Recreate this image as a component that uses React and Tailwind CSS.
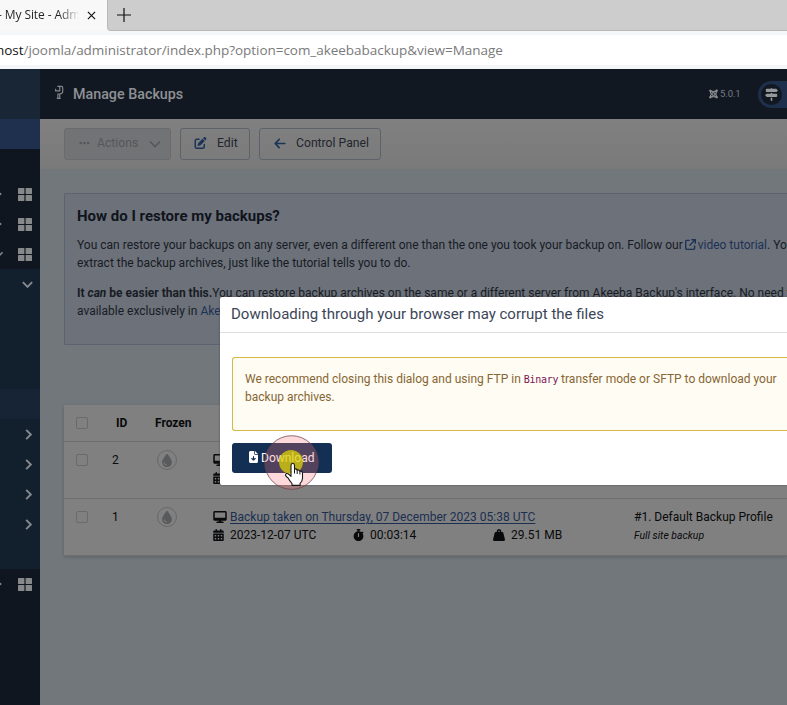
import React from 'react';
import {
  FaArrowLeft, FaArrowUpRightFromSquare, FaCalendarDays, FaDesktop, FaDroplet,
  FaEllipsis, FaFileArrowDown, FaJoomla, FaPenToSquare, FaSignsPost, FaStopwatch, FaWeightHanging,
} from 'react-icons/fa6';

const Chevron = ({ className, d = 'M2 4.5 7 9.5 12 4.5', w = 1.9 }) => (
  <svg viewBox="0 0 14 14" className={className} fill="none" stroke="currentColor" strokeWidth={w}>
    <path d={d} />
  </svg>
);

function BrowserBar() {
  return (
    <div className="h-[69px] shrink-0 bg-[#f4f6f7] font-['Open_Sans',sans-serif] whitespace-nowrap">
      <div className="flex h-[31px] bg-[#f7f7f7]">
        <div className="flex h-[31px] w-[107px] items-center bg-[#f8f8f8]">
          <span className="-ml-[2px] w-[81px] overflow-hidden bg-gradient-to-r from-[#222] from-75% to-[#f8f8f8] to-100% bg-clip-text pb-[2px] text-[12px] tracking-[-0.1px] text-transparent">- My Site - Adm</span>
          <svg viewBox="0 0 10 10" className="ml-[8px] h-[9px] w-[9px]" stroke="#111" strokeWidth="1.3"><path d="M1 1 9 9M9 1 1 9" /></svg>
        </div>
        <div className="flex h-[31px] flex-1 rounded-bl-[4px] border-b border-l border-[#b9b9b9] bg-[#cdcdcd]">
          <svg viewBox="0 0 14 14" className="mt-[8px] ml-[9px] h-[14px] w-[14px]" stroke="#111" strokeWidth="1.2"><path d="M7 0V14M0 7H14" /></svg>
        </div>
      </div>
      <div className="mt-[4px] flex h-[30px] items-center bg-white text-[13.5px] tracking-[-0.04px] text-[#7a7a7a]">
        <span className="-ml-[4px] text-[#151515]">host</span><span>/joomla/administrator/index.php?option=com_akeebabackup&amp;view=Manage</span>
      </div>
    </div>
  );
}

const Grid = () => (
  <svg viewBox="0 0 14 13" className="h-[13px] w-[14px]" fill="#86888a">
    <rect width="6.4" height="6" rx=".6" /><rect x="7.6" width="6.4" height="6" rx=".6" />
    <rect y="7" width="6.4" height="6" rx=".6" /><rect x="7.6" y="7" width="6.4" height="6" rx=".6" />
  </svg>
);

function GridRow({ open }) {
  return (
    <div className="flex h-[30px] items-center">
      {open
        ? <Chevron className="-ml-[6px] h-[10px] w-[10px] text-[#86888a]" w={2.2} />
        : <Chevron className="-ml-[6px] h-[10px] w-[10px] text-[#86888a]" d="M4.5 3 9 7 4.5 11" w={2.6} />}
      <span className="ml-[14px]"><Grid /></span>
    </div>
  );
}

const SubRow = () => (
  <div className="flex h-[30px] items-center pl-[22px]">
    <Chevron className="h-[13px] w-[13px] text-[#85898d]" d="M4.5 2 9.5 7 4.5 12" w={2.1} />
  </div>
);

function Sidebar() {
  return (
    <aside className="flex w-10 shrink-0 flex-col bg-[#0f1620]">
      <div className="h-[50px] bg-[#182636]" />
      <div className="h-[30px] bg-[#1e304e]" />
      <div className="h-[30px]" />
      <GridRow /><GridRow /><GridRow open />
      <div className="flex h-[300px] flex-col bg-[#121f2d]">
        <div className="flex h-[30px] items-center pl-[21px]"><Chevron className="h-[13px] w-[13px] text-[#85898d]" w={2.1} /></div>
        <div className="h-[90px]" />
        <div className="h-[30px] bg-[#162436]" />
        <SubRow /><SubRow /><SubRow /><SubRow />
      </div>
      <GridRow />
    </aside>
  );
}

function Header() {
  return (
    <header className="flex h-[50px] items-center bg-[#111822] text-[#8f9194]">
      <svg viewBox="0 0 10 16" className="-mt-[4px] ml-[14px] h-[15px] w-[10px] shrink-0" fill="none" stroke="#85878a" strokeWidth="1.2">
        <path d="M3.2 1.4H7.4Q9 1.4 9 3V7Q9 9.2 5.8 9.6V14M5.8 9.6H3.8V14M2.6 14.3H6.8M5.8 2V6.2H1.4V4" />
      </svg>
      <h1 className="mt-[1px] ml-[9px] w-[126px] text-[14.3px] font-medium whitespace-nowrap">Manage Backups</h1>
      <FaJoomla className="ml-[510px] h-[10px] w-[9px] shrink-0" />
      <span className="ml-[2px] w-[20px] text-[9.5px] tracking-[-0.1px] text-[#777b80]">5.0.1</span>
      <div className="ml-[18px] flex h-[27px] flex-1 items-center rounded-l-full bg-[#1d2f4b] pl-[3px]">
        <span className="flex h-[21px] w-[21px] shrink-0 items-center justify-center rounded-full bg-[#111822]"><FaSignsPost className="h-[13px] w-[13px] text-[#96989a]" /></span>
      </div>
    </header>
  );
}

function Toolbar() {
  return (
    <div className="flex h-[51px] shrink-0 border-b border-[#72777a] bg-gradient-to-b from-[#808080] to-[#7a7a7b] pt-[9px] pl-6 text-[12.2px] whitespace-nowrap">
      <div className="flex h-8 w-[107px] items-center rounded-[3px] border border-[#696b6e] bg-[#727375] pb-[2px] text-[#55575b]">
        <FaEllipsis className="ml-[14px] h-[12px] w-[11px]" />
        <span className="ml-[7px] w-[42px]">Actions</span>
        <Chevron className="mt-[2px] ml-[9px] h-[14px] w-[14px]" w={1.7} />
      </div>
      <div className="ml-[9px] flex h-8 w-[70px] items-center rounded-[3px] border border-[#5d626b] pb-[2px] text-[#22262d]">
        <FaPenToSquare className="ml-[13px] h-[12px] w-[13px] text-[#1b3458]" />
        <span className="ml-[10px]">Edit</span>
      </div>
      <div className="ml-[9px] flex h-8 w-[122px] items-center rounded-[3px] border border-[#5d626b] pb-[2px] text-[#22262d]">
        <FaArrowLeft className="ml-[14px] h-[13px] w-[12px] text-[#1b3458]" />
        <span className="ml-[10px]">Control Panel</span>
      </div>
    </div>
  );
}

function Help() {
  return (
    <section className="mt-[23px] ml-6 h-[152px] shrink-0 rounded-l-[2px] border border-r-0 border-[#5b6271] bg-[#6c717a] pt-[12px] pl-[12px] text-[12px] leading-[18px] whitespace-nowrap text-[#181c24]">
      <h2 className="text-[15px] leading-[20px] font-bold text-[#10141c]">How do I restore my backups?</h2>
      <p className="mt-[10px]">
        You can restore your backups on any server, even a different one than the one you took your backup on. Follow our{' '}
        <span className="-ml-px text-[#1c3155]"><FaArrowUpRightFromSquare className="mr-[2px] inline h-[11px] w-[11px] align-[-1px]" />video tutorial</span>. You can<br />
        extract the backup archives, just like the tutorial tells you to do.
      </p>
      <p className="mt-[12px]">
        <b>It <i>can</i> be easier than this.</b>You can restore backup archives on the same or a different server from Akeeba Backup's interface. No need to<br />
        available exclusively in <span className="text-[#1c3155]">Akeeba Backup</span>
      </p>
    </section>
  );
}

const Box = () => <span className="mt-[12px] ml-[12px] block h-[12px] w-[12px] shrink-0 rounded-[2px] border border-[#6a6a6a]" />;

function Row({ id, time }) {
  return (
    <div className="flex h-[57px] border-b border-[#6e6f70]">
      <Box />
      <span className="mt-[9px] ml-[24px] w-[45px] leading-[18px]">{id}</span>
      <span className="mt-[8px] flex h-[20px] w-[20px] items-center justify-center rounded-full border border-[#686868]"><FaDroplet className="h-[13px] w-[12px] shrink-0 text-[#595a5b]" /></span>
      <div className="mt-[9px] ml-[36px] w-[421px] leading-[18px]">
        <div className="flex items-center"><FaDesktop className="mr-[3px] h-[12px] w-[14px]" /><span className="text-[#1b2f51] underline underline-offset-2">Backup taken on Thursday, 07 December 2023 {time} UTC</span></div>
        <div className="flex items-center">
          <span className="flex w-[140px] items-center"><FaCalendarDays className="mr-[6px] h-[12px] w-[11px]" />2023-12-07 UTC</span>
          <span className="flex w-[140px] items-center"><FaStopwatch className="mr-[6px] h-[12px] w-[11px]" />00:03:14</span>
          <span className="flex items-center"><FaWeightHanging className="mr-[6px] h-[12px] w-[12px]" />29.51 MB</span>
        </div>
      </div>
      <div className="mt-[9px] leading-[18px]">
        <div>#1. Default Backup Profile</div>
        <div className="pt-[1px] text-[10.4px] italic">Full site backup</div>
      </div>
    </div>
  );
}

function Backups() {
  return (
    <section className="mt-[60px] ml-6 shrink-0 bg-[#808080] text-[12.03px] whitespace-nowrap text-[#090a0c] shadow-[0_1px_3px_#5b6064]">
      <div className="flex h-[37px] items-center border-b border-[#6c6d6e] font-bold">
        <span className="ml-[12px] block h-[12px] w-[12px] rounded-[2px] border border-[#6a6a6a]" />
        <span className="ml-[28px] w-[39px]">ID</span><span>Frozen</span>
      </div>
      <Row id="2" time="05:49" /><Row id="1" time="05:38" />
    </section>
  );
}

function Dialog() {
  return (
    <div className="absolute top-[297px] left-[220px] h-[188px] w-[567px] rounded-l-[2px] bg-white whitespace-nowrap shadow-[0_0_2px_#444]">
      <h3 className="h-[36px] border-b border-[#dcdee1] pl-[11px] text-[15px] leading-[34px] text-[#3c4658]">Downloading through your browser may corrupt the files</h3>
      <div className="mt-[24px] ml-[12px] h-[74px] rounded-l-[3px] border border-r-0 border-[#d6b84a] bg-[#fffcf4] pt-[12px] pl-[12px] text-[12px] leading-[18px] text-[#866632]">
        We recommend closing this dialog and using FTP in <code className="font-['DejaVu_Sans_Mono',monospace] text-[10px] leading-none tracking-[-0.3px] text-[#7a1456]">Binary</code> transfer mode or SFTP to download your<br />backup archives.
      </div>
      <div className="mt-[12px] ml-[12px] flex h-[30px] w-[100px] items-center rounded-[3px] bg-[#132f53] pb-[2px] text-[12px] text-white">
        <FaFileArrowDown className="ml-[17px] h-[12px] w-[9px]" /><span className="ml-[3px] pt-[1px]">Download</span>
      </div>
    </div>
  );
}

const ClickMarker = () => (
  <svg className="absolute top-[434px] left-[264px]" width="56" height="58" viewBox="0 0 56 58">
    <circle cx="27.5" cy="28.5" r="26.8" fill="#f8777c" fillOpacity=".28" stroke="#6b3f45" strokeOpacity=".75" />
    <circle cx="27" cy="28" r="12" fill="#e2d800" fillOpacity=".72" />
    <g transform="translate(4.5 2)">
      <path d="M17 39.2Q17.4 36.6 20 38L22.5 40.3V29.4Q22.6 27.3 24.2 27.3T26 29.4V33Q28 32.6 28.6 34Q30.4 33.4 31.4 35.2Q34 34.6 34 37.6V42.2Q34 45 31.6 47.4V49.4H23.5V47.5Q21 44.6 19.6 42Q17.5 40.5 17 39.2Z" fill="#fff" stroke="#171717" strokeWidth="1.1" strokeLinejoin="round" />
      <path d="M26 33V37.5M28.7 34V38M31.4 35V38.5" stroke="#171717" strokeWidth="1" />
    </g>
  </svg>
);

export default function App() {
  return (
    <div className="relative flex h-[705px] w-[787px] flex-col overflow-hidden font-[Roboto,sans-serif]">
      <BrowserBar />
      <div className="flex min-h-0 flex-1">
        <Sidebar />
        <main className="flex min-w-0 flex-1 flex-col overflow-hidden bg-[#72777b]">
          <Header /><Toolbar /><Help /><Backups />
        </main>
      </div>
      <Dialog />
      <ClickMarker />
    </div>
  );
}
